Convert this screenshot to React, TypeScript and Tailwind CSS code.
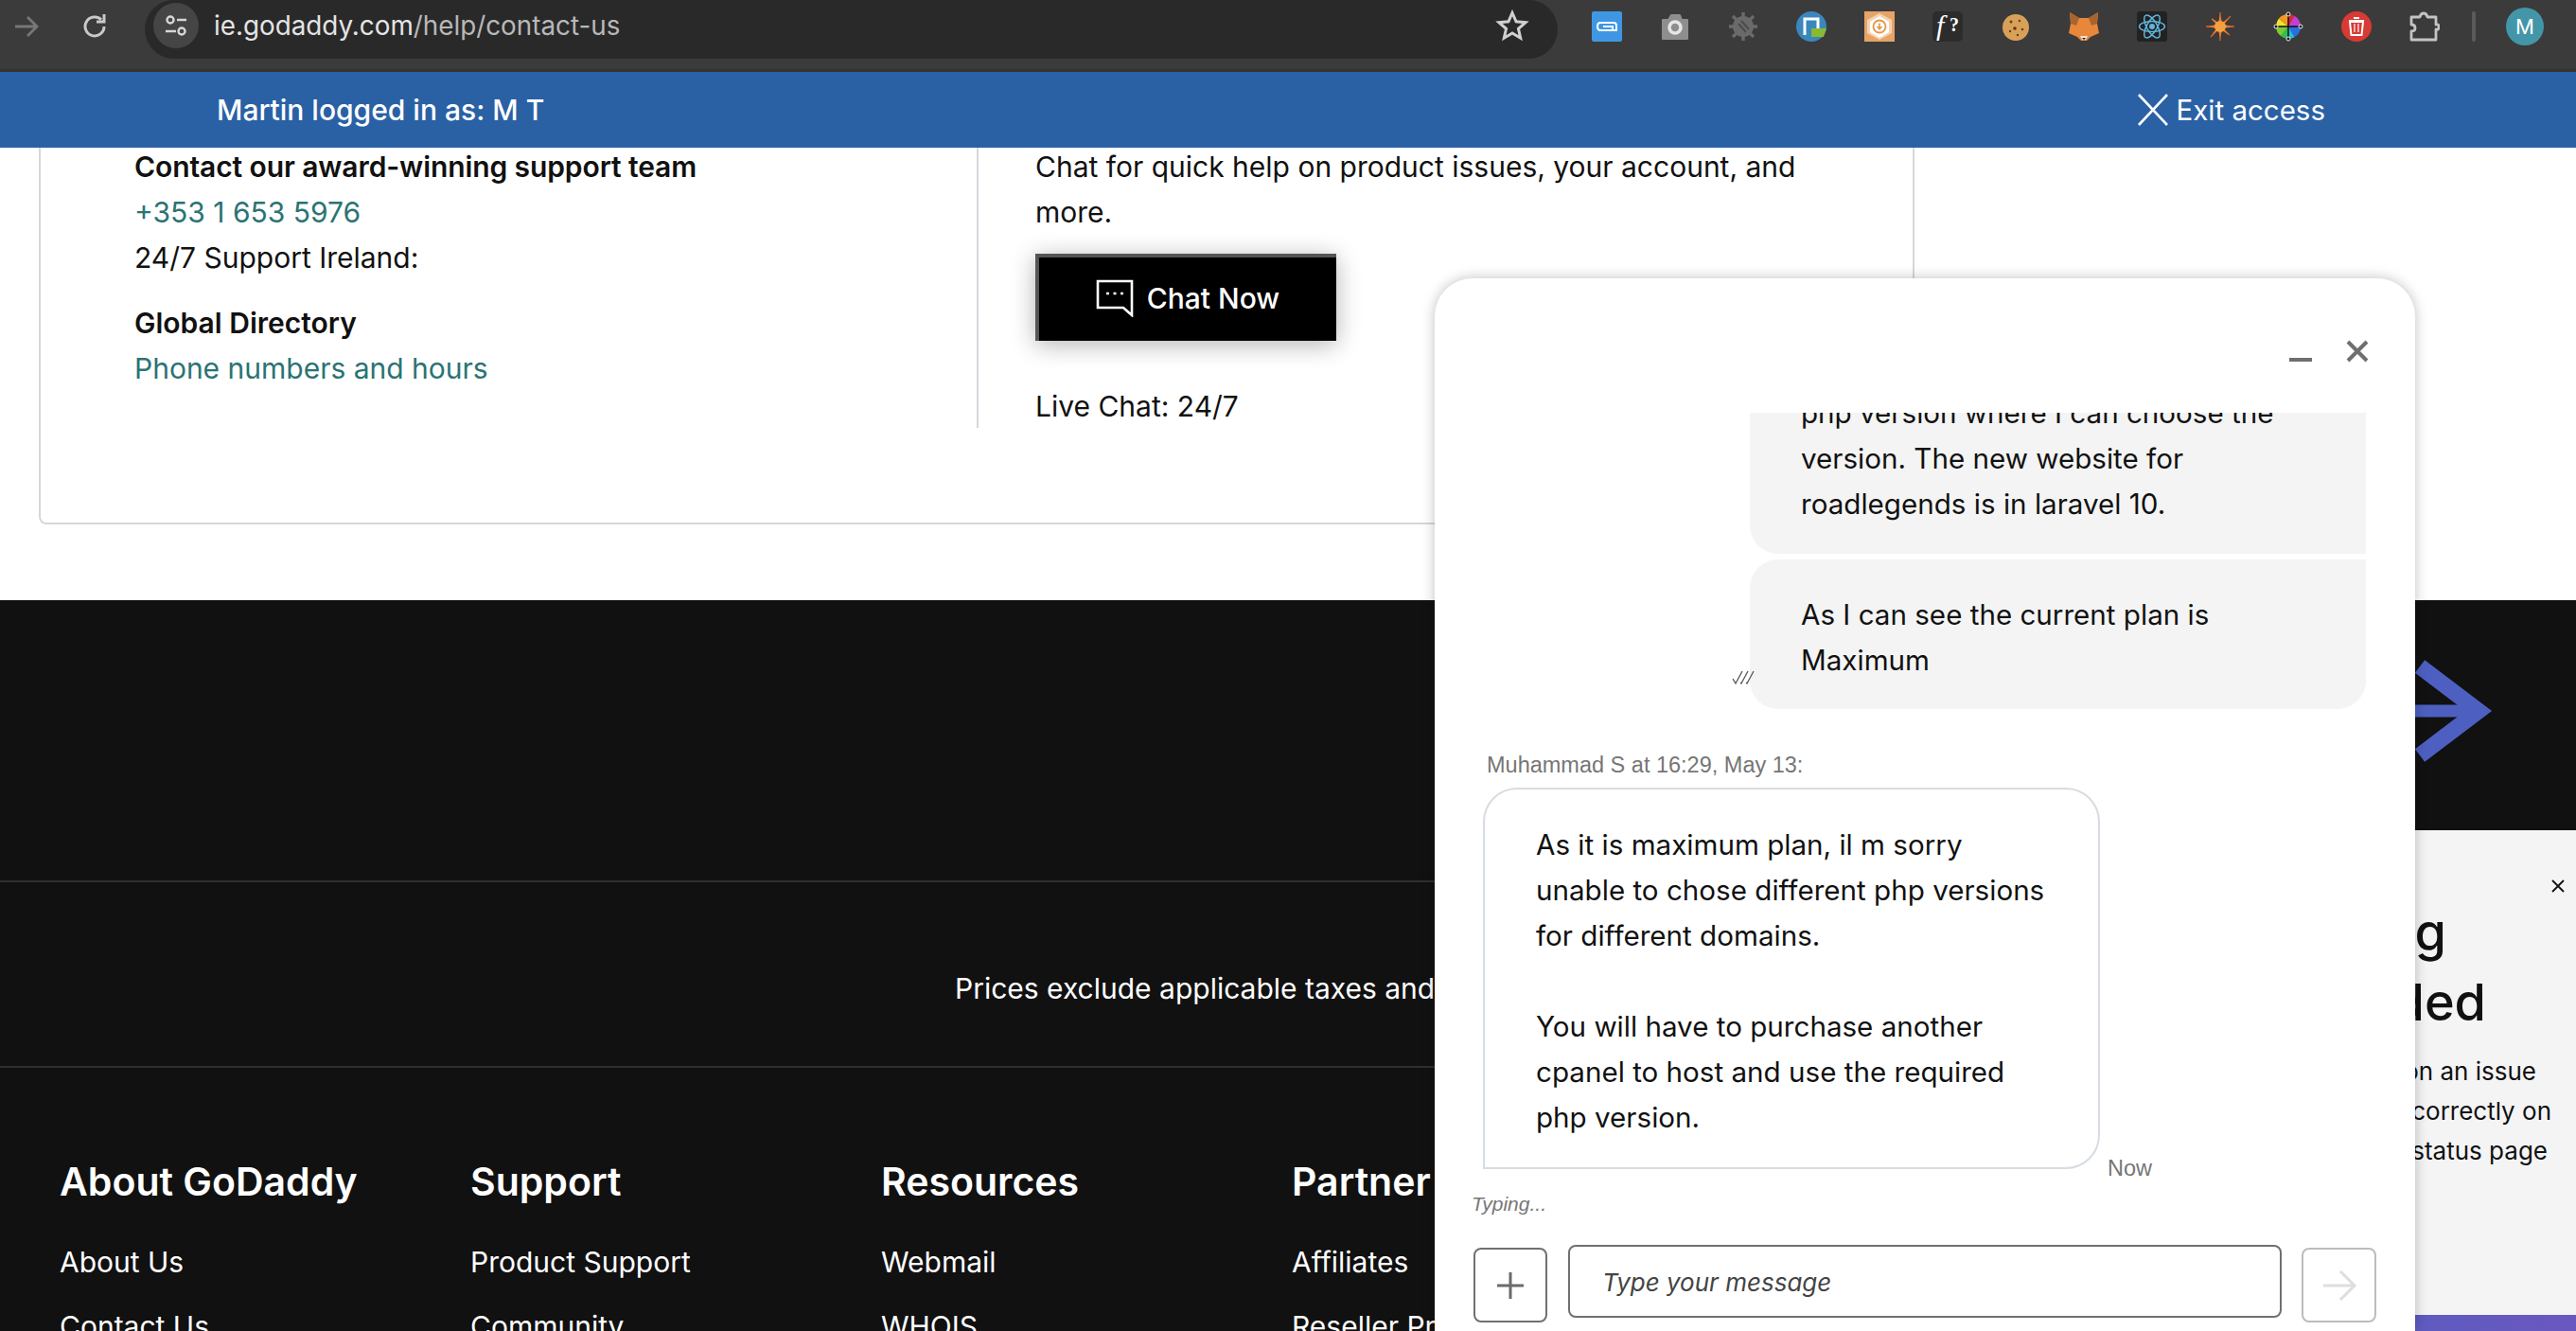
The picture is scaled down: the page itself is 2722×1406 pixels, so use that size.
import React from 'react';

const sans = "font-['Inter',sans-serif]";

const ExtIcons: React.FC = () => {
  return (
    <div className="flex items-center gap-[40px] ml-[36px]">
      {/* gmail-ish blue square */}
      <svg width="32" height="32" viewBox="0 0 32 32">
        <rect width="32" height="32" rx="2" fill="#3f97e3" />
        <path d="M9 12h14q3 0 3 3v5H9q-3 0-3-4t3-4M12 16h10v4" fill="none" stroke="#fff" strokeWidth="2" />
      </svg>
      <svg width="32" height="32" viewBox="0 0 32 32">
        <path d="M3 9h6l3-5h9l2 5h6v20H3z" fill="#8e8e8e" stroke="#8e8e8e" strokeWidth="2" strokeLinejoin="round" />
        <circle cx="16" cy="17" r="6" fill="none" stroke="#e6e6e6" strokeWidth="3.500" />
      </svg>
      <svg width="32" height="32" viewBox="0 0 32 32">
        <circle cx="16" cy="16" r="11" fill="#6a6a6a" />
        <path d="M16 1v30M1 16h30M5 5l22 22M27 5L5 27" stroke="#6a6a6a" strokeWidth="3.400" />
        <path d="M11 13l8 9M14 10l8 9" stroke="#4a4a4a" strokeWidth="2" />
      </svg>
      <svg width="32" height="32" viewBox="0 0 32 32">
        <circle cx="16" cy="16" r="16" fill="#3a87bd" />
        <path d="M9 25V8h14v12" fill="none" stroke="#fff" strokeWidth="3" />
        <path d="M16 18h16l-3 9H16z" fill="#8ab933" />
      </svg>
      <svg width="32" height="32" viewBox="0 0 32 32">
        <rect width="32" height="32" fill="#e6a468" />
        <path d="M16 2l13 7v14l-13 7-13-7V9z" fill="#f6d3ae" />
        <path d="M16 5l10 6v11l-10 6-10-6V11z" fill="#fff" />
        <circle cx="16" cy="16" r="6.500" fill="none" stroke="#e39745" strokeWidth="1.800" />
        <path d="M16 12.500v6M13.500 16l2.500 2.800 2.500-2.800" fill="none" stroke="#e39745" strokeWidth="1.600" />
      </svg>
      <svg width="32" height="32" viewBox="0 0 32 32">
        <rect width="32" height="32" rx="5" fill="#2c2c2c" />
        <text x="4" y="25" fill="#fff" fontSize="30" fontStyle="italic" fontFamily="Liberation Serif, serif">f</text>
        <text x="18" y="21" fill="#fff" fontSize="20" fontWeight="700" fontFamily="Liberation Serif, serif">?</text>
      </svg>
      <svg width="32" height="32" viewBox="0 0 32 32">
        <circle cx="16" cy="17" r="14" fill="#d9a158" />
        <circle cx="11" cy="11" r="1.500" fill="#6b3d1c" />
        <circle cx="20" cy="10" r="1.200" fill="#6b3d1c" />
        <circle cx="15" cy="18" r="1.800" fill="#5c3317" />
        <circle cx="23" cy="19" r="1.300" fill="#6b3d1c" />
        <circle cx="10" cy="21" r="1.200" fill="#6b3d1c" />
        <circle cx="18" cy="25" r="1.200" fill="#6b3d1c" />
      </svg>
      <svg width="32" height="32" viewBox="0 0 32 32">
        <path d="M1 1l10 6h10l10-6-1 12 2 10-9 4-4 4h-6l-4-4-9-4 2-10z" fill="#e8873a" />
        <path d="M1 1l10 6-3 8-6-2zM31 1L21 7l3 8 6-2z" fill="#a9642e" />
        <path d="M12 26h8l-2 4h-4z" fill="#f0e4d8" />
        <path d="M14 28h4l-2 2z" fill="#222" />
      </svg>
      <svg width="32" height="32" viewBox="0 0 32 32">
        <rect width="32" height="32" rx="3" fill="#222" />
        <circle cx="16" cy="16" r="3" fill="#61b5dc" />
        <g fill="none" stroke="#61b5dc" strokeWidth="1.500">
          <ellipse cx="16" cy="16" rx="13.500" ry="5.500" />
          <ellipse cx="16" cy="16" rx="13.500" ry="5.500" transform="rotate(60 16 16)" />
          <ellipse cx="16" cy="16" rx="13.500" ry="5.500" transform="rotate(120 16 16)" />
        </g>
      </svg>
      <svg width="32" height="32" viewBox="0 0 32 32">
        <path d="M16 1v30M1 16h30M27 5L6 27M7 8l19 17" stroke="#e2622e" strokeWidth="1.300" />
        <path d="M16 3l2 9 7-5-5 7 9 2-9 2 5 7-7-5-2 8-2-8-7 5 5-7-9-2 9-2-5-7 7 5z" fill="#ea7b33" />
        <circle cx="16" cy="16" r="6" fill="#f5a03c" />
      </svg>
      <svg width="32" height="32" viewBox="0 0 32 32">
        <path d="M16 16V3a13 13 0 0 1 6.500 1.700z" fill="#d82b2b" />
        <path d="M16 16l6.500-11.300A13 13 0 0 1 29 16z" fill="#c23fd3" />
        <path d="M16 16h13a13 13 0 0 1-6.500 11.300z" fill="#2a6fe0" />
        <path d="M16 16l6.500 11.300A13 13 0 0 1 16 29z" fill="#23c3d0" />
        <path d="M16 16v13a13 13 0 0 1-8-3z" fill="#2fbf5a" />
        <path d="M16 16l-8 10a13 13 0 0 1-5-10z" fill="#7dcb32" />
        <path d="M16 16H3a13 13 0 0 1 3-8.500z" fill="#f3e22e" />
        <path d="M16 16L6 7.500A13 13 0 0 1 16 3z" fill="#f39a22" />
        <path d="M16 3v26M3 16h26" stroke="#111" strokeWidth="1.500" />
        <g fill="#111" stroke="#eee" strokeWidth="1">
          <circle cx="16" cy="3" r="2" />
          <circle cx="16" cy="29" r="2" />
          <circle cx="3" cy="16" r="2" />
          <circle cx="29" cy="16" r="2" />
        </g>
      </svg>
      <svg width="32" height="32" viewBox="0 0 32 32">
        <circle cx="16" cy="16" r="16" fill="#d83a34" />
        <path d="M9 11l1.500 14h11L23 11zM8 10h16M13 7h6" fill="none" stroke="#fff" strokeWidth="2" />
        <path d="M14 13v9M18 13v9" stroke="#fff" strokeWidth="1.200" />
      </svg>
      <svg width="32" height="32" viewBox="0 0 32 32">
        <path d="M2 6h9q1-4 4-4t4 4h9v8q3-1 3 2.500T28 19v11H2V21q4 0 4-3.500T2 14z" fill="none" stroke="#c4c4c4" strokeWidth="2.800" strokeLinejoin="round" />
      </svg>
      <div className="w-[4px] h-[32px] rounded-full bg-[#5a5a5a] ml-[-6px] mr-[-8px]"></div>
      <div className={`w-[40px] h-[40px] rounded-full bg-[#4296a8] text-white text-[22px] flex items-center justify-center ${sans}`}>M</div>
    </div>
  );
};

const FooterCol: React.FC<{ title: string; links: string[] }> = ({ title, links }) => {
  return (
    <div className="w-[434px] shrink-0">
      <h4 className="text-[41px] leading-[60px] font-semibold text-white">{title}</h4>
      <ul className="mt-[31px] flex flex-col gap-[20px]">
        {links.map((l) => (
          <li key={l} className="text-[30px] leading-[48px] text-white">{l}</li>
        ))}
      </ul>
    </div>
  );
};

const ChatPanel: React.FC = () => {
  return (
    <div className={`absolute left-[1516px] top-[294px] w-[1036px] h-[1112px] bg-white rounded-t-[40px] shadow-[0_0_14px_rgba(0,0,0,0.25)] flex flex-col z-20 ${sans}`}>
      {/* header */}
      <div className="h-[142px] shrink-0 flex justify-end items-start pt-[65px] pr-[49px] gap-[36px]">
        <svg width="24" height="6" viewBox="0 0 24 6" className="mt-[18px]"><path d="M0 3h24" stroke="#6f6f6f" strokeWidth="4" /></svg>
        <svg width="24" height="24" viewBox="0 0 24 24"><path d="M2 2l20 20M22 2L2 22" stroke="#6f6f6f" strokeWidth="4" /></svg>
      </div>

      {/* messages */}
      <div className="h-[878px] shrink-0 overflow-hidden flex flex-col text-[29.6px] leading-[48px] text-[#111]">
        <div className="-mt-[24px] ml-[333px] mr-[52px] bg-[#f4f4f4] rounded-bl-[30px] pl-[54px] pr-[40px] pb-[29px]">
          php version where I can choose the version. The new website for roadlegends is in laravel 10.
        </div>
        <div className="relative mt-[6px] ml-[333px] mr-[52px] bg-[#f4f4f4] rounded-tl-[30px] rounded-b-[30px] pl-[54px] pr-[40px] pt-[34px] pb-[28px]">
          As I can see the current plan is Maximum
          <svg width="26" height="16" viewBox="0 0 26 16" className="absolute left-[-19px] top-[117px]">
            <path d="M1 9l3 5 7-13M9 13l1 1 7-13M15 13l1 1 7-13" fill="none" stroke="#555" strokeWidth="1.300" />
          </svg>
        </div>
        <div className="mt-[46px] ml-[55px] font-['Liberation_Sans',sans-serif] text-[23.500px] leading-[26px] text-[#767676]">Muhammad S at 16:29, May 13:</div>
        <div className="mt-[11px] ml-[51px] flex items-end">
          <div className="w-[652px] border-2 border-[#d6dce2] rounded-[36px] rounded-bl-none pl-[54px] pt-[34px] pb-[29px] whitespace-nowrap">
            <p>As it is maximum plan, il m sorry<br />unable to chose different php versions<br />for different domains.</p>
            <p className="mt-[48px]">You will have to purchase another<br />cpanel to host and use the required<br />php version.</p>
          </div>
          <span className="ml-[8px] font-['Liberation_Sans',sans-serif] text-[23.500px] leading-[26px] text-[#767676] -mb-[12px]">Now</span>
        </div>
        <div className="mt-[25px] ml-[39px] font-['Liberation_Sans',sans-serif] italic text-[21px] leading-[24px] text-[#767676]">Typing...</div>
      </div>

      {/* input row */}
      <div className="flex items-start pl-[41px]">
        <div className="mt-[4px] w-[78px] h-[79px] border-2 border-[#707070] rounded-[8px] flex items-center justify-center">
          <svg width="32" height="32" viewBox="0 0 32 32"><path d="M16 2v28M2 16h28" stroke="#6b6b6b" strokeWidth="3" /></svg>
        </div>
        <div className="ml-[22px] mt-[1px] w-[754px] h-[77px] border-2 border-[#707070] rounded-[8px] flex items-center pl-[34px] pt-[2px] italic text-[26px] text-[#444]">Type your message</div>
        <div className="ml-[21px] mt-[4px] w-[79px] h-[79px] border-2 border-[#bcbcbc] rounded-[8px] flex items-center justify-center">
          <svg width="38" height="34" viewBox="0 0 38 34"><path d="M2 17h33M20 2l15 15-15 15" fill="none" stroke="#dedede" strokeWidth="3" /></svg>
        </div>
      </div>
    </div>
  );
};

const App: React.FC = () => {
  return (
    <div className={`relative w-[2722px] h-[1406px] overflow-hidden bg-white ${sans}`}>
      {/* browser toolbar */}
      <div className="relative z-10 h-[76px] bg-[#3b3b3b] border-b-[3px] border-[#343434] flex items-start">
        <div className="w-[153px] h-[56px] shrink-0 flex items-center gap-[43px] pl-[14px]">
          <svg width="28" height="28" viewBox="0 0 28 28"><path d="M2 14h23M15 4l10 10-10 10" fill="none" stroke="#777" strokeWidth="2.800" /></svg>
          <svg width="30" height="30" viewBox="0 0 30 30"><path d="M25 15a10 10 0 1 1-3-7.200M25 2v8h-8" fill="none" stroke="#c9c9c9" strokeWidth="3" /></svg>
        </div>
        <div className="w-[1493px] h-[62px] shrink-0 bg-[#292929] rounded-[36px] flex items-center relative">
          <div className="ml-[9px] mt-[-8px] w-[48px] h-[48px] rounded-full bg-[#454545] flex items-center justify-center">
            <svg width="26" height="26" viewBox="0 0 26 26">
              <circle cx="7" cy="7" r="3.500" fill="none" stroke="#d6d6d6" strokeWidth="2.400" />
              <circle cx="19" cy="19" r="3.500" fill="none" stroke="#d6d6d6" strokeWidth="2.400" />
              <path d="M14 7h10M2 19h11" stroke="#d6d6d6" strokeWidth="2.600" />
            </svg>
          </div>
          <span className="ml-[16px] mt-[-6px] text-[27.800px] text-[#e4e4e4]">
            ie.godaddy.com<span className="text-[#b8b8b8]">/help/contact-us</span>
          </span>
          <svg width="36" height="36" viewBox="0 0 24 24" className="absolute right-[30px] top-[9px]">
            <path d="M12 3l2.700 6.200 6.700.6-5.100 4.400 1.500 6.600L12 17.300l-5.800 3.500 1.500-6.600L2.600 9.800l6.700-.6z" fill="none" stroke="#d0d0d0" strokeWidth="2" />
          </svg>
        </div>
        <div className="h-[56px] flex items-center"><ExtIcons /></div>
      </div>

      {/* impersonation bar */}
      <div className="relative z-10 h-[80px] bg-[#2a61a5] text-white text-[30px] font-medium flex items-center pl-[229px]">
        <span>Martin logged in as: M T</span>
        <div className="ml-auto mr-[265px] flex items-center gap-[6px] font-normal text-[29.500px]">
          <svg width="36" height="36" viewBox="0 0 36 36"><path d="M3 2l30 32M33 2L3 34" stroke="#fff" strokeWidth="2.600" /></svg>
          <span>Exit access</span>
        </div>
      </div>

      {/* contact card */}
      <section className="h-[482px] -mt-[4px] text-[30px] leading-[48px] text-[#111]">
        <div className="ml-[41px] w-[2400px] h-[402px] border-l-2 border-b-2 border-[#d4d8dd] rounded-bl-[8px] flex items-start">
          <div className="w-[991px] h-[300px] border-r-2 border-[#d4d8dd] pl-[99px] shrink-0">
            <p className="font-semibold tracking-[-0.1px]">Contact our award-winning support team</p>
            <p className="text-[#2b7373]">+353 1 653 5976</p>
            <p>24/7 Support Ireland:</p>
            <p className="mt-[21px] font-semibold">Global Directory</p>
            <p className="text-[#2b7373]">Phone numbers and hours</p>
          </div>
          <div className="w-[989px] h-[300px] border-r-2 border-[#d4d8dd] pl-[60px] pr-[60px] shrink-0">
            <p>Chat for quick help on product issues, your account, and more.</p>
            <button className="mt-[20px] w-[318px] h-[92px] bg-black border-t-4 border-l-4 border-[#555] text-white font-medium flex items-center justify-center gap-[14px] pb-[3px] shadow-[0_4px_24px_rgba(0,0,0,0.3)]">
              <svg width="40" height="40" viewBox="0 0 40 40"><path d="M2 2h36v36l-9-8H2z" fill="none" stroke="#fff" strokeWidth="2.600" /><path d="M11 15h3M18.500 15h3M26 15h3" stroke="#fff" strokeWidth="2.600" /></svg>
              Chat Now
            </button>
            <p className="mt-[45px]">Live Chat: 24/7</p>
          </div>
        </div>
      </section>

      {/* footer */}
      <footer className="relative bg-[#111] h-[772px] text-white">
        <div className="h-[298px] border-b-2 border-[#2f2f2f]"></div>
        <div className="h-[196px] border-b-2 border-[#2f2f2f] pl-[1009px] pt-[88px] text-[30px] leading-[48px]">Prices exclude applicable taxes and ICANN fees.</div>
        <div className="flex pl-[63px] pt-[90px]">
          <FooterCol title="About GoDaddy" links={['About Us', 'Contact Us']} />
          <FooterCol title="Support" links={['Product Support', 'Community']} />
          <FooterCol title="Resources" links={['Webmail', 'WHOIS']} />
          <FooterCol title="Partner Programs" links={['Affiliates', 'Reseller Programs']} />
        </div>
        {/* big arrow peeking out behind the chat */}
        <svg width="200" height="120" viewBox="0 0 200 120" className="absolute left-[2440px] top-[62px]">
          <path d="M60 55h115" fill="none" stroke="#4d60c2" strokeWidth="13" />
          <path d="M117 8l62 47-62 47" fill="none" stroke="#4d60c2" strokeWidth="17" />
        </svg>
      </footer>

      {/* status popup */}
      <div className="absolute z-10 left-[2300px] top-[877px] w-[422px] h-[529px] bg-[#f4f4f5] rounded-tl-[8px] flex flex-col items-end text-[#111]">
        <svg width="18" height="18" viewBox="0 0 18 18" className="absolute right-[10px] top-[50px]"><path d="M3 3l12 12M15 3L3 15" stroke="#111" strokeWidth="1.800" /></svg>
        <div className="mt-[71px] mr-[137px] text-[54px] leading-[74px] font-medium whitespace-nowrap">Something</div>
        <div className="mr-[95px] text-[54px] leading-[74px] font-medium whitespace-nowrap">Degraded</div>
        <div className="mt-[15px] mr-[42px] text-[26px] leading-[42px] whitespace-nowrap">We're working on an issue</div>
        <div className="mr-[26px] text-[26px] leading-[42px] whitespace-nowrap">that isn't running correctly on</div>
        <div className="mr-[30px] text-[26px] leading-[42px] whitespace-nowrap">our system status page</div>
        <div className="absolute left-0 right-0 bottom-0 h-[17px] bg-[linear-gradient(90deg,#4f60c0,#6a58c0)]"></div>
      </div>

      <ChatPanel />
    </div>
  );
};

export default App;
